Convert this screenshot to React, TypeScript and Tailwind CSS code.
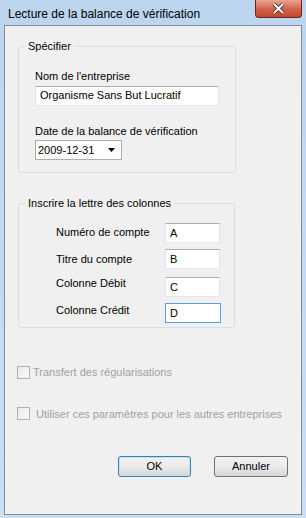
import React from "react";

function TextBox({ value, className = "", focused = false }: { value: string; className?: string; focused?: boolean }) {
  return (
    <div
      className={`h-[20px] bg-white border flex items-center px-[4px] text-[11px] text-black ${
        focused ? "border-[#569de5]" : "border-t-[#abadb3] border-l-[#e2e3ea] border-r-[#e2e3ea] border-b-[#e3e9ef]"
      } ${className}`}
    >
      {value}
    </div>
  );
}

function CheckBox({ label, className = "" }: { label: string; className?: string }) {
  return (
    <div className={`flex items-center ${className}`}>
      <span className="w-[13px] h-[13px] border border-[#b1b1b1] bg-gradient-to-br from-[#e8e8e8] to-[#fbfbfb]" />
      <span className="text-[11px] text-[#a0a0a0]">{label}</span>
    </div>
  );
}

function GroupBox({ title, className = "", children }: { title: string; className?: string; children: React.ReactNode }) {
  return (
    <fieldset className={`border border-[#d5dfe5] rounded-[3px] ${className}`}>
      <legend className="ml-[6px] px-[3px] text-[11px] text-black leading-[13px]">{title}</legend>
      {children}
    </fieldset>
  );
}

export default function App() {
  return (
    <div
      className="w-[306px] h-[518px] flex flex-col bg-gradient-to-b from-[#bcd5ee] to-[#c9def4] overflow-hidden"
      style={{ fontFamily: '"Liberation Sans", Arial, sans-serif' }}
    >
      {/* title bar */}
      <div className="h-[25px] flex items-start justify-between">
        <span className="mt-[5px] ml-[8px] text-[12px] text-black">Lecture de la balance de vérification</span>
        <div className="mr-[4px] w-[47px] h-[18px] rounded-b-[4px] border border-t-0 border-[#6b2418] bg-gradient-to-b from-[#e8a593] via-[#d2664b] to-[#c4452b] flex items-center justify-center">
          <svg width="13" height="11" viewBox="0 0 13 11">
            <path d="M2 1 L11 10 M11 1 L2 10" stroke="#3d1a12" strokeWidth="3.6" />
            <path d="M2 1 L11 10 M11 1 L2 10" stroke="#ffffff" strokeWidth="2.2" />
          </svg>
        </div>
      </div>

      {/* client area */}
      <div className="flex-1 mx-[4px] mb-[3px] bg-[#f0f0f0] border border-[#7f8c99] flex flex-col px-[13px]">
        <GroupBox title="Spécifier" className="mt-[14px] w-[217px] h-[133px]">
          <div className="px-[16px]">
            <div className="mt-[15px] text-[11px] text-black">Nom de l'entreprise</div>
            <TextBox value="Organisme Sans But Lucratif" className="mt-[1px] w-[184px]" />
            <div className="mt-[17px] text-[11px] text-black">Date de la balance de vérification</div>
            <div className="mt-[1px] w-[87px] h-[20px] bg-white border border-[#abadb3] flex items-center justify-between pl-[2px] pr-[6px] text-[11px] text-black">
              <span>2009-12-31</span>
              <svg width="7" height="4" viewBox="0 0 7 4">
                <path d="M0 0 L7 0 L3.5 4 Z" fill="#000" />
              </svg>
            </div>
          </div>
        </GroupBox>

        <GroupBox title="Inscrire la lettre des colonnes" className="mt-[24px] w-[217px] h-[131px]">
          <div className="pl-[37px] mt-[13px] grid grid-cols-[109px_auto] gap-y-[6px] items-center text-[11px] text-black">
            <span className="-mt-[1px]">Numéro de compte</span>
            <TextBox value="A" className="w-[55px]" />
            <span>Titre du compte</span>
            <TextBox value="B" className="w-[55px]" />
            <span className="-mt-[5px]">Colonne Débit</span>
            <TextBox value="C" className="w-[55px] mt-[2px]" />
            <span className="-mt-[5px]">Colonne Crédit</span>
            <TextBox value="D" className="w-[56px]" focused />
          </div>
        </GroupBox>

        <CheckBox label="Transfert des régularisations" className="mt-[36px] -ml-[1px] gap-[3px]" />
        <CheckBox label="Utiliser ces paramètres pour les autres entreprises" className="mt-[25px] -ml-[1px] gap-[6px]" />

        <div className="mt-[34px] flex justify-end gap-[23px] pr-0">
          <button className="w-[73px] h-[21px] rounded-[3px] border border-[#3c7fb1] bg-gradient-to-b from-[#f2f2f2] via-[#ebebeb] to-[#d6d6d6] text-[11px] text-black shadow-[inset_0_0_0_1px_#bfe4f8]">
            OK
          </button>
          <button className="w-[74px] h-[21px] rounded-[3px] border border-[#707070] bg-gradient-to-b from-[#f2f2f2] via-[#ebebeb] to-[#d6d6d6] text-[11px] text-black">
            Annuler
          </button>
        </div>
      </div>
    </div>
  );
}
